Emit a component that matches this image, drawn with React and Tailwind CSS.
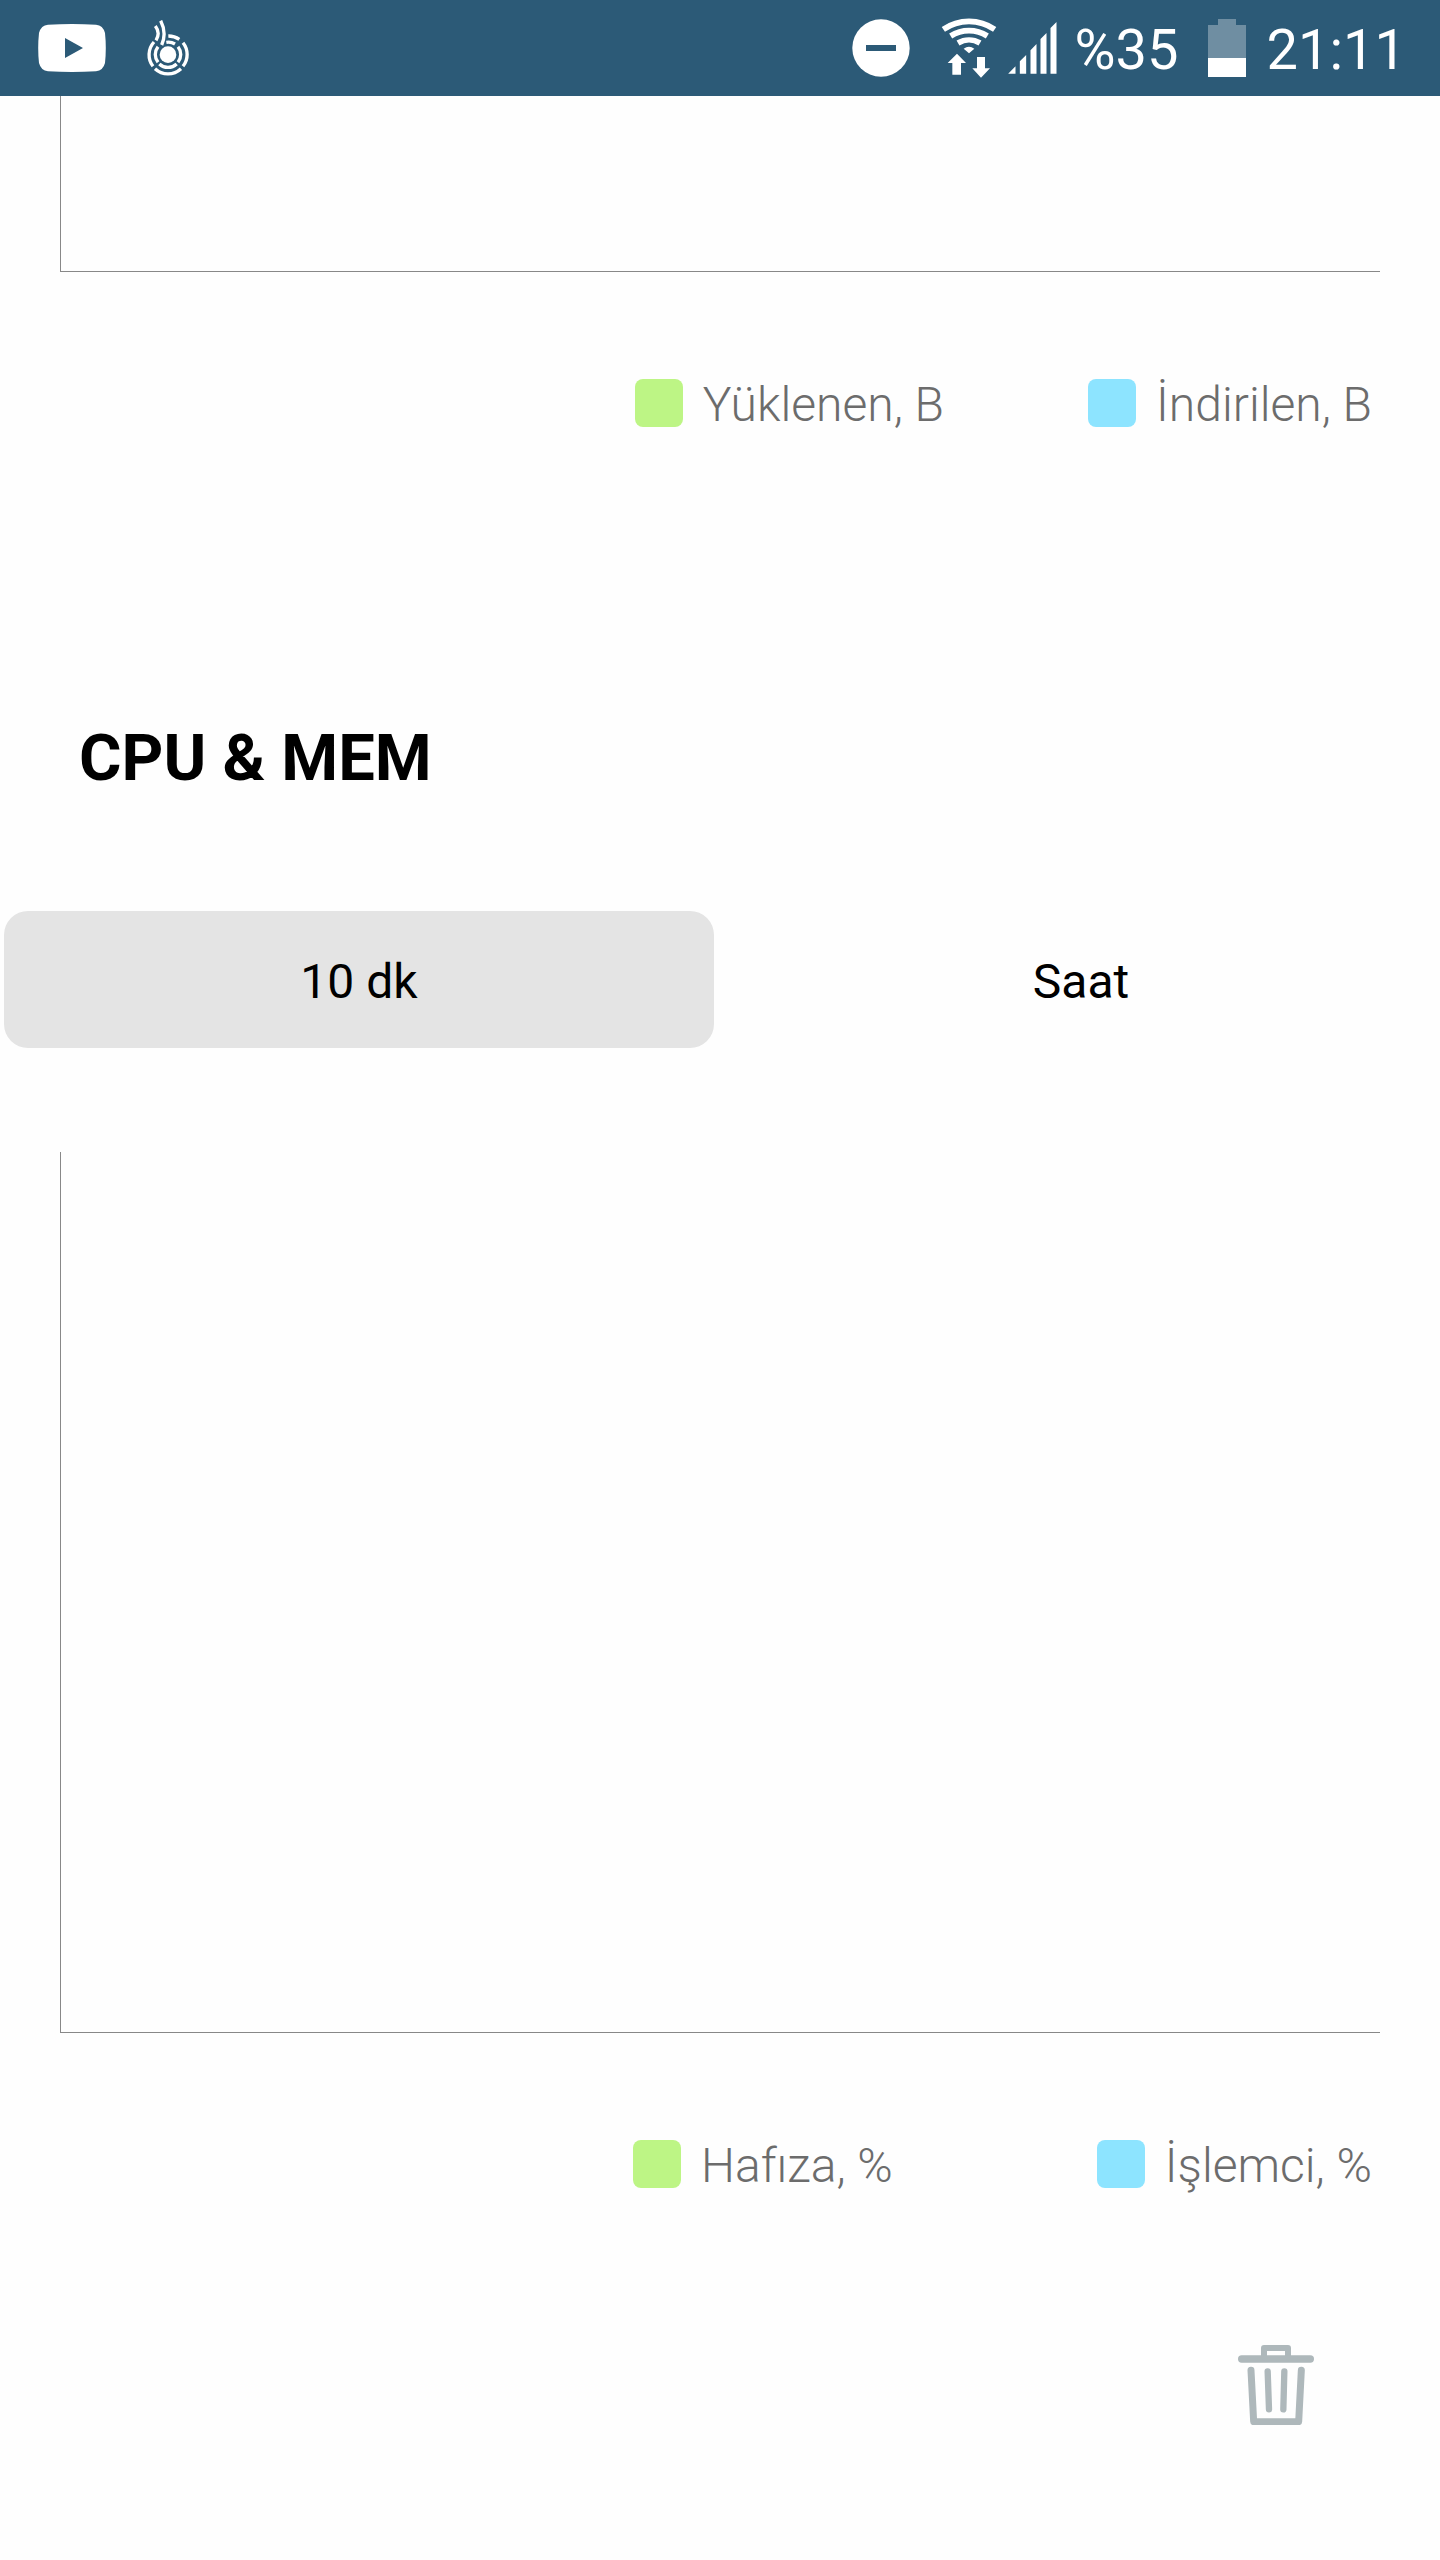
import React, { useState } from "react";

function StatusBar() {
  return (
    <header className="flex h-24 items-center justify-between bg-[#2c5a77] pr-[34px] pl-[38px] text-white">
      <div className="flex items-center gap-[41px]">
        <svg className="h-12 w-[68px]" viewBox="0 0 68 48" fill="none" aria-label="YouTube">
          <path
            fill="#fff"
            fillRule="evenodd"
            d="M10 .7Q34-.5 58 .7Q65 1.3 67 9Q68.6 24 67 39Q65 46.700 58 47.300Q34 48.500 10 47.300Q3 46.700 1 39Q-.6 24 1 9Q3 1.300 10 .7ZM27 14V34L45 24Z"
          />
        </svg>
        <svg className="h-14 w-[42px]" viewBox="441 64 126 168" fill="none" stroke="#fff" strokeWidth="10" aria-label="Notification">
          <circle cx="504" cy="168" r="25" fill="#fff" stroke="none" />
          <path d="M549 132A57 57 0 0 1 549 203M543 210A57 57 0 0 1 465 210M459 203A57 57 0 0 1 462 130M505 112A57 57 0 0 1 538 122" />
          <path d="M534 144A38 38 0 0 1 534 191M530 196A38 38 0 0 1 478 196M474 191A38 38 0 0 1 474 144M499 131A38 38 0 0 1 525 136" />
          <path d="M482 66Q501 103 485 139M466 82Q482 103 468 125" />
        </svg>
      </div>

      <div className="flex items-center">
        <svg className="h-[58px] w-[58px]" viewBox="0 0 58 58" aria-label="Do not disturb">
          <circle cx="29" cy="29" r="28.700" fill="#fff" />
          <path d="M14 26H44V32H14Z" fill="#2c5a77" />
        </svg>
        <svg className="ml-[31px] h-[60px] w-14" viewBox="333 54 168 180" fill="none" stroke="#fff" strokeWidth="17" aria-label="Wi-Fi">
          <path d="M340 88A135 135 0 0 1 494 88M362 108A103 103 0 0 1 472 108M384 129A65 65 0 0 1 450 129" />
          <path
            stroke="none"
            fill="#fff"
            d="M401 146Q417 134 433 146L417 160ZM381 161L408 189H393V224H367V189H353ZM441 171H465V205H480L453 233L427 205H441Z"
          />
        </svg>
        <svg className="ml-[11px] h-[52px] w-[49px]" viewBox="536 66 146 156" fill="#fff" aria-label="Signal">
          <path d="M536 221L558 199V221ZM571 221V184L590 165V221ZM603 221V151L621 132V221ZM633 221V117L651 99V221ZM663 221V84L681 66V221Z" />
        </svg>
        <span className="ml-[18px] pt-1 text-[56px] leading-none">%35</span>
        <svg className="ml-[29px] h-[58px] w-[38px]" viewBox="0 0 38 58" aria-label="Battery">
          <path d="M0 6H10V0H28V6H38V40H0Z" fill="#6f8ea2" />
          <path d="M0 39H38V58H0Z" fill="#fff" />
        </svg>
        <time className="ml-[21px] pt-1 text-[56px] leading-none">21:11</time>
      </div>
    </header>
  );
}

function LegendItem({ color, children }) {
  return (
    <li className="flex h-12 items-center gap-5">
      <span className={`h-12 w-12 rounded-lg ${color}`} />
      <span className="pt-1 text-[48px] leading-[56px]">{children}</span>
    </li>
  );
}

function Trash() {
  return (
    <svg className="h-20 w-[76px]" viewBox="114 75 228 240" fill="none" stroke="#aeb8bb" strokeLinecap="round" strokeLinejoin="round">
      <path strokeWidth="22" d="M125 117H331" />
      <path strokeWidth="18" d="M192 112V84H264V112" />
      <path strokeWidth="21" d="M153 151L161 305H296L304 151" />
      <path strokeWidth="19" d="M203 154L207 268M253 154L250 268" />
    </svg>
  );
}

export default function App() {
  const [range, setRange] = useState("10 dk");

  return (
    <div className="min-h-screen bg-[#fefefe] font-['Roboto',sans-serif] text-black">
      <StatusBar />
      <main>
        <section>
          <div className="mx-[60px] h-44 border-b border-l border-[#888888]" />
          <ul className="mt-[107px] flex justify-end gap-36 pr-[68px] font-light text-[#6c6c6c]">
            <LegendItem color="bg-[#bdf585]">Yüklenen, B</LegendItem>
            <LegendItem color="bg-[#8de4ff]">İndirilen, B</LegendItem>
          </ul>
        </section>

        <section>
          <h1 className="mt-[291px] px-[79px] text-[65px] leading-[80px] font-bold">CPU &amp; MEM</h1>
          <div className="mt-[113px] flex gap-3 px-1">
            {["10 dk", "Saat"].map((label) => (
              <button
                key={label}
                type="button"
                aria-pressed={range === label}
                onClick={() => setRange(label)}
                className={`h-[137px] flex-1 rounded-3xl pt-1 text-[48px] ${range === label ? "bg-[#e4e4e4]" : ""}`}
              >
                {label}
              </button>
            ))}
          </div>
          <div className="mx-[60px] mt-[104px] h-[881px] border-b border-l border-[#888888]" />
          <ul className="mt-[107px] flex justify-end gap-[204px] pr-[68px] font-light text-[#6c6c6c]">
            <LegendItem color="bg-[#bdf585]">Hafıza, %</LegendItem>
            <LegendItem color="bg-[#8de4ff]">İşlemci, %</LegendItem>
          </ul>
        </section>

        <div className="mt-[157px] flex justify-end pr-[126px]">
          <button type="button" aria-label="Sil">
            <Trash />
          </button>
        </div>
      </main>
    </div>
  );
}
